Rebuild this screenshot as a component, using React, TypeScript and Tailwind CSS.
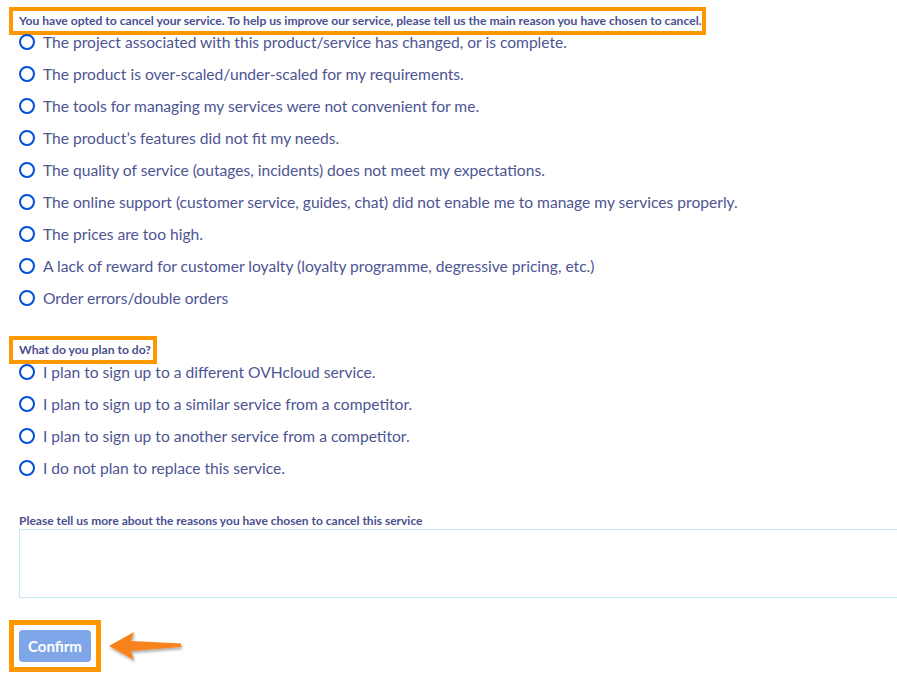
import React from "react";

const reasons = [
  "The project associated with this product/service has changed, or is complete.",
  "The product is over-scaled/under-scaled for my requirements.",
  "The tools for managing my services were not convenient for me.",
  "The product\u2019s features did not fit my needs.",
  "The quality of service (outages, incidents) does not meet my expectations.",
  "The online support (customer service, guides, chat) did not enable me to manage my services properly.",
  "The prices are too high.",
  "A lack of reward for customer loyalty (loyalty programme, degressive pricing, etc.)",
  "Order errors/double orders",
];

const plans = [
  "I plan to sign up to a different OVHcloud service.",
  "I plan to sign up to a similar service from a competitor.",
  "I plan to sign up to another service from a competitor.",
  "I do not plan to replace this service.",
];

function Radio({ label }: { label: string }) {
  return (
    <label className="flex h-8 items-center pl-[19px]">
      <span className="box-border h-[16px] w-[16px] shrink-0 rounded-full border-[2.5px] border-[#0050d7]" />
      <span className="ml-[8px] text-[15.6px] leading-5 text-[#4d5592]">{label}</span>
    </label>
  );
}

export default function App() {
  return (
    <div
      className="relative h-[674px] w-[897px] overflow-hidden bg-white"
      style={{ fontFamily: "Lato, 'Open Sans', sans-serif" }}
    >
      <div className="pt-[7px] pl-[9px]">
        <div className="box-border flex h-[28px] w-[697px] items-center border-4 border-[#ff9800] pl-[6px] text-[12.15px] font-bold text-[#4a4f8f]">
          You have opted to cancel your service. To help us improve our service, please tell us the main reason you have chosen to cancel.
        </div>
      </div>
      <div className="-mt-[9px] flex flex-col">
        {reasons.map((r) => (
          <Radio key={r} label={r} />
        ))}
      </div>
      <div className="mt-[22px] pl-[9px]">
        <div className="box-border flex h-[28px] w-[148px] items-center border-4 border-[#ff9800] pl-[6px] text-[12.15px] font-bold text-[#4a4f8f]">
          What do you plan to do?
        </div>
      </div>
      <div className="-mt-2 flex flex-col">
        {plans.map((r) => (
          <Radio key={r} label={r} />
        ))}
      </div>
      <div className="mt-[29px] pl-[19px]">
        <div className="h-4 text-[12px] font-bold leading-4 text-[#4a4f8f]">
          Please tell us more about the reasons you have chosen to cancel this service
        </div>
        <textarea className="box-border block h-[69px] w-[900px] resize-none border border-[#c2ecf2] outline-none" />
      </div>
      <div className="mt-[22px] flex items-center pl-[9px]">
        <div className="box-border border-[5px] border-[#ff9800] p-[5px]">
          <button className="flex h-8 w-[72px] items-center justify-center rounded-[4px] bg-[#80a6ea] text-[15px] font-bold text-white">
            Confirm
          </button>
        </div>
        <svg width="80" height="40" viewBox="0 0 80 40" className="ml-[5px]">
          <defs>
            <filter id="sh" x="-20%" y="-30%" width="150%" height="170%">
              <feDropShadow dx="1" dy="2" stdDeviation="1.5" floodColor="#000" floodOpacity="0.35" />
            </filter>
          </defs>
          <path
            d="M3 20 L28 6 L25 15 L75 17.5 L75 21 L25 25 L28 34 Z"
            fill="#f7831c"
            filter="url(#sh)"
          />
        </svg>
      </div>
    </div>
  );
}
